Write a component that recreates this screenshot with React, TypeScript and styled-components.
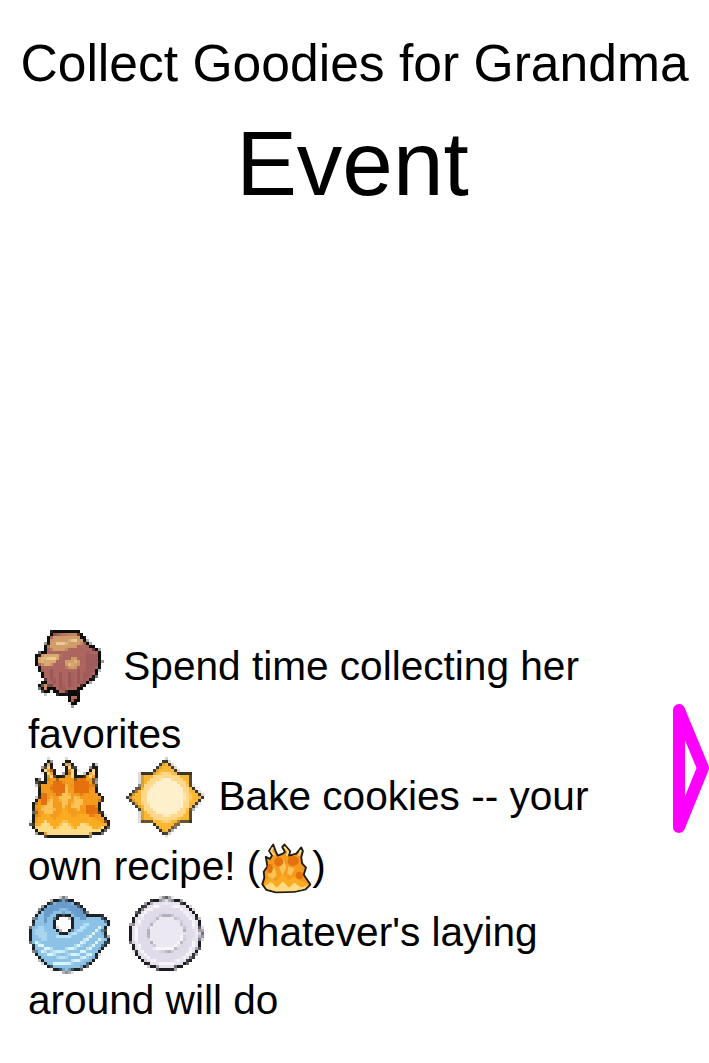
import React from 'react';
import styled, { createGlobalStyle } from 'styled-components';

const GlobalStyle = createGlobalStyle`
  html, body {
    margin: 0;
    padding: 0;
    background: #fff;
  }
`;

const App: React.FC = () => {
  return (
    <Page>
      <GlobalStyle />
      <FilterDefs width="0" height="0">
        <filter id="pixelate" filterUnits="userSpaceOnUse" x="0" y="0" width="603" height="297" primitiveUnits="userSpaceOnUse">
          <feFlood x="3" y="3" width="3" height="3" floodColor="#000" />
          <feComposite width="9" height="9" />
          <feTile result="grid" />
          <feComposite in="SourceGraphic" in2="grid" operator="in" />
          <feMorphology operator="dilate" radius="3" />
          <feGaussianBlur stdDeviation="1.6" />
        </filter>
        <filter id="soften" filterUnits="userSpaceOnUse" x="0" y="0" width="300" height="300">
          <feGaussianBlur stdDeviation="2" />
        </filter>
      </FilterDefs>
      <Header>
        <Title>Collect Goodies for Grandma</Title>
        <EventName>Event</EventName>
      </Header>
      <Goodies>
        <Goodie>
          <Sprite viewBox="24 15 252 252"><Rock /></Sprite> Spend time collecting her favorites
        </Goodie>
        <Goodie $gap={-6}>
          <Sprite viewBox="24 6 252 252"><Fire filter="url(#pixelate)" /></Sprite> <Sprite viewBox="306 6 252 252"><Sun /></Sprite> Bake cookies -- your own recipe! (<SmallSprite viewBox="24 6 252 252"><Fire filter="url(#soften)" /></SmallSprite>)
        </Goodie>
        <Goodie $gap={-2}>
          <Sprite viewBox="24 6 252 252"><Donut /></Sprite> <Sprite viewBox="306 6 252 252"><Plate /></Sprite> Whatever's laying around will do
        </Goodie>
      </Goodies>
      <NextButton aria-label="Next">
        <svg width="40" height="140" viewBox="669 700 40 140">
          <polygon points="679,710 703,768 679,827" fill="none" stroke="#ff00ff" strokeWidth="12" strokeLinejoin="round" />
        </svg>
      </NextButton>
    </Page>
  );
};

export default App;

const Rock: React.FC = () => (
  <g filter="url(#pixelate)">
    <path
      d="M95 32 L178 30 L205 66 L238 88 L246 125 L226 170 L182 205 L172 214 L182 235 L160 256 L142 235 L150 216 L120 226 L98 206 L76 218 L54 195 L74 180 L60 150 L46 128 L50 100 L72 90 L84 50 Z"
      fill="#111"
      stroke="#111"
      strokeWidth="4"
      strokeLinejoin="round"
    />
    <path d="M97 40 L174 38 L198 72 L232 92 L238 125 L220 165 L178 198 L166 205 L120 216 L100 196 L82 190 L66 148 L54 128 L56 106 L78 96 L92 52 Z" fill="#ad6560" />
    <path d="M100 42 L172 40 L192 64 L160 82 L108 92 L84 80 Z" fill="#d09c6a" />
    <path d="M58 106 L90 96 L122 104 L106 128 L76 136 L56 124 Z" fill="#d9a870" />
    <path d="M134 120 L165 108 L184 124 L166 142 L140 140 Z" fill="#d09c6a" />
    <path d="M106 70 L172 58 M66 117 L106 113 M146 128 L172 124" stroke="#eccb92" strokeWidth="7" fill="none" />
    <path d="M195 92 L232 100 L234 128 L216 162 L182 192 L196 140 Z" fill="#a05c5c" />
    <path d="M92 145 L102 190 M122 150 L126 205 M152 150 L152 195 M178 140 L172 185" stroke="#9a5858" strokeWidth="10" fill="none" />
    <path d="M66 194 L78 186 L88 196 L76 208 Z" fill="#c98a62" />
    <path d="M150 226 L172 226 L160 246 Z" fill="#b86a58" />
  </g>
);

const Fire: React.FC<{ filter: string }> = props => (
  <g filter={props.filter}>
    <path
      d="M35 210 L45 180 L42 150 L60 125 L52 78 L72 88 L82 72 L68 48 L88 18 L100 50 L110 72 L135 62 L145 55 L132 30 L142 18 L170 50 L165 72 L200 62 L224 32 L232 50 L224 80 L228 110 L247 130 L236 165 L250 185 L268 212 L245 235 L190 248 L100 250 L55 238 Z"
      fill="#f49a1e"
      stroke="#1e1a18"
      strokeWidth="9"
      strokeLinejoin="round"
    />
    <path d="M86 32 L78 50 L94 70 M142 30 L160 52 L154 72 M222 44 L212 74" stroke="#f7d68a" strokeWidth="9" fill="none" />
    <path d="M135 80 L152 130 L132 172 L118 130 Z M60 165 L95 130 L105 170 L80 190 Z M160 125 L192 135 L175 170 L156 160 Z" fill="#fbc254" />
    <ellipse cx="115" cy="102" rx="22" ry="22" fill="#e4710f" />
    <ellipse cx="185" cy="98" rx="27" ry="24" fill="#e4710f" />
    <ellipse cx="72" cy="135" rx="13" ry="22" fill="#e4710f" />
    <ellipse cx="215" cy="168" rx="18" ry="18" fill="#e4710f" />
    <path d="M42 212 L72 174 L104 198 L135 160 L160 192 L188 174 L225 196 L262 212 L240 232 L190 243 L100 245 L58 232 Z" fill="#fbab22" />
    <path d="M48 220 L78 200 L105 228 L135 198 L165 228 L190 202 L222 226 L258 216 L240 232 L190 243 L100 245 L58 232 Z" fill="#fddc85" />
  </g>
);

const Sun: React.FC = () => (
  <g filter="url(#pixelate)">
    <polygon
      points="435,18 475,58 511,58 511,95 547,130 511,168 511,205 475,205 435,243 395,205 360,205 360,168 322,130 360,95 360,58 395,58"
      fill="#fbb733"
      stroke="#38342c"
      strokeWidth="7"
      strokeLinejoin="miter"
    />
    <circle cx="435" cy="130" r="74" fill="#ffd88a" />
    <circle cx="435" cy="130" r="56" fill="#fff0cc" />
  </g>
);

const Donut: React.FC = () => (
  <g filter="url(#pixelate)">
    <path
      d="M205 78 A110 110 0 0 0 135 26 A109 109 0 1 0 225 205 L245 175 L268 150 L250 125 L268 100 L245 78 Z"
      fill="#8cc2e6"
      stroke="#1c2228"
      strokeWidth="8"
      strokeLinejoin="round"
    />
    <path d="M70 60 Q125 15 178 55 Q198 72 198 92 Q170 88 150 60 Q120 50 90 72 L72 110 Z" fill="#6a9ccb" />
    <path d="M42 120 Q55 160 85 150 L70 105 Z" fill="#a9d6ee" />
    <path d="M45 152 Q100 205 180 165 L240 112 M62 180 Q120 220 205 178 L245 145 M100 218 Q160 228 218 188" stroke="#d9f4fc" strokeWidth="8" fill="none" />
    <path d="M110 140 Q150 150 205 100" stroke="#b6e2f5" strokeWidth="10" fill="none" />
    <circle cx="132" cy="101" r="28" fill="#fff" stroke="#1c2228" strokeWidth="9" />
  </g>
);

const Plate: React.FC = () => (
  <g filter="url(#pixelate)">
    <circle cx="435" cy="132" r="106" fill="#e6e2ee" stroke="#1e1d22" strokeWidth="8" />
    <circle cx="435" cy="132" r="88" fill="#dfdbe8" stroke="#f8f6fb" strokeWidth="7" />
    <circle cx="437" cy="130" r="54" fill="#ebe8f2" stroke="#b3afbd" strokeWidth="5" />
    <path d="M400 175 Q465 195 490 130" stroke="#f8f7fb" strokeWidth="9" fill="none" />
  </g>
);

const FilterDefs = styled.svg`
  position: absolute;
`;

const Page = styled.div`
  position: relative;
  height: 1063px;
  overflow: hidden;
  font-family: 'Liberation Sans', Arial, sans-serif;
  color: #000;
`;

const Header = styled.header`
  display: flex;
  flex-direction: column;
  align-items: center;
  padding-top: 36px;
`;

const Title = styled.h1`
  margin: 0;
  font-size: 51.6px;
  font-weight: 400;
  line-height: 55px;
  white-space: nowrap;
`;

const EventName = styled.h2`
  margin: 21px 0 0;
  padding-right: 4px;
  font-size: 91px;
  font-weight: 400;
  line-height: 104px;
`;

const Goodies = styled.div`
  margin-top: 416px;
  padding: 0 69px 0 28px;
`;

const Goodie = styled.p<{ $gap?: number }>`
  margin: ${({ $gap }) => $gap ?? 0}px 0 0;
  font-size: 40.6px;
  line-height: 68px;
`;

const Sprite = styled.svg`
  width: 84px;
  height: 84px;
  margin: -8px 0 -10px;
  vertical-align: -20px;
`;

const SmallSprite = styled.svg`
  width: 52px;
  height: 52px;
  margin-top: 12px;
  vertical-align: -14px;
`;

const NextButton = styled.div`
  position: absolute;
  top: 700px;
  right: 0;
  width: 40px;
  height: 140px;
`;
